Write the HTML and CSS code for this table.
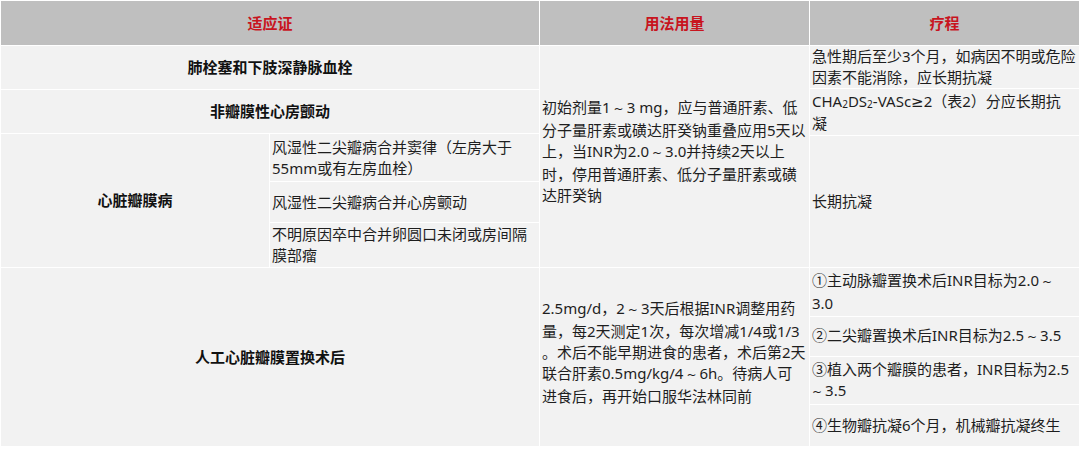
FILE: index.html
```html
<!DOCTYPE html>
<html lang="zh-CN">
<head>
<meta charset="utf-8">
<title>抗凝适应证</title>
<link rel="stylesheet" href="styles.css">
</head>
<body>
<div class="table">
  <div class="th th-left">适应证</div>
  <div class="th">用法用量</div>
  <div class="th">疗程</div>

  <div class="stack g1">
    <div class="cell bold center h43">肺栓塞和下肢深静脉血栓</div>
    <div class="cell bold center h43">非瓣膜性心房颤动</div>
    <div class="valve">
      <div class="cell bold center">心脏瓣膜病</div>
      <div class="stack">
        <div class="cell h47"><span class="ln">风湿性二尖瓣病合并窦律（左房大于</span><span class="ln">55mm或有左房血栓）</span></div>
        <div class="cell h40"><span class="ln">风湿性二尖瓣病合并心房颤动</span></div>
        <div class="cell h44"><span class="ln">不明原因卒中合并卵圆口未闭或房间隔</span><span class="ln">膜部瘤</span></div>
      </div>
    </div>
  </div>
  <div class="cell mid g1">
    <span class="ln">初始剂量1<span class="tl">~</span>3 mg，应与普通肝素、低</span>
    <span class="ln">分子量肝素或磺达肝癸钠重叠应用5天以</span>
    <span class="ln">上，当INR为2.0<span class="tl">~</span>3.0并持续2天以上</span>
    <span class="ln">时，停用普通肝素、低分子量肝素或磺</span>
    <span class="ln">达肝癸钠</span>
  </div>
  <div class="stack g1">
    <div class="cell h42"><span class="ln">急性期后至少3个月，如病因不明或危险</span><span class="ln">因素不能消除，应长期抗凝</span></div>
    <div class="cell h46"><span class="ln">CHA<span class="sub">2</span>DS<span class="sub">2</span>-VASc<span class="ge">≥</span>2（表2）分应长期抗</span><span class="ln">凝</span></div>
    <div class="cell grow">长期抗凝</div>
  </div>

  <div class="cell bold center g2">人工心脏瓣膜置换术后</div>
  <div class="cell mid g2">
    <span class="ln">2.5mg/d，2<span class="tl">~</span>3天后根据INR调整用药</span>
    <span class="ln">量，每2天测定1次，每次增减1/4或1/3</span>
    <span class="ln">。术后不能早期进食的患者，术后第2天</span>
    <span class="ln">联合肝素0.5mg/kg/4<span class="tl">~</span>6h。待病人可</span>
    <span class="ln">进食后，再开始口服华法林同前</span>
  </div>
  <div class="stack g2">
    <div class="cell h48"><span class="ln">①主动脉瓣置换术后INR目标为2.0<span class="tl">~</span></span><span class="ln">3.0</span></div>
    <div class="cell h39"><span class="ln">②二尖瓣置换术后INR目标为2.5<span class="tl">~</span>3.5</span></div>
    <div class="cell h47"><span class="ln">③植入两个瓣膜的患者，INR目标为2.5</span><span class="ln"><span class="tl tl-first">~</span>3.5</span></div>
    <div class="cell grow"><span class="ln">④生物瓣抗凝6个月，机械瓣抗凝终生</span></div>
  </div>
</div>
</body>
</html>
```
FILE: styles.css
```css
html, body {
  margin: 0;
  padding: 0;
  background: #ffffff;
}
body {
  font-family: "Noto Sans", "Noto Sans CJK SC", sans-serif;
  font-size: 15px;
  line-height: 21px;
  color: #1e1e1e;
}
.table {
  display: grid;
  grid-template-columns: 538px 269px 269px;
  grid-template-rows: 44px 221px 178px;
  gap: 1px;
  padding: 1px;
  width: 1080px;
  box-sizing: border-box;
  background: #ffffff;
}
.th {
  background: #bfbfbf;
  color: #c8141e;
  font-weight: bold;
  display: flex;
  align-items: center;
  justify-content: center;
}
.stack {
  display: flex;
  flex-direction: column;
  gap: 1px;
  min-height: 0;
}
.cell {
  background: #f2f2f2;
  display: flex;
  flex-direction: column;
  justify-content: center;
  padding: 0 0 0 2px;
  overflow: hidden;
  min-height: 0;
}
.ln {
  display: block;
  white-space: nowrap;
}
.center {
  align-items: center;
  text-align: center;
  padding: 0;
}
.bold {
  font-weight: bold;
  color: #111111;
}
.mid {
  padding-bottom: 10px;
}
.valve {
  display: grid;
  grid-template-columns: 268px 269px;
  gap: 1px;
  flex: 1;
  min-height: 0;
}
.grow { flex: 1; }
.h39 { height: 39px; }
.h40 { height: 40px; }
.h42 { height: 42px; }
.h43 { height: 43px; }
.h44 { height: 44px; }
.h46 { height: 46px; }
.h47 { height: 47px; }
.h48 { height: 48px; }
.sub {
  font-size: 10px;
  line-height: 0;
  vertical-align: -1px;
}
.tl {
  font-family: "DejaVu Sans", sans-serif;
  font-size: 12px;
  padding: 0 3px;
}
.tl-first {
  padding-left: 0;
}
.ge {
  font-family: "DejaVu Sans", sans-serif;
}
```
